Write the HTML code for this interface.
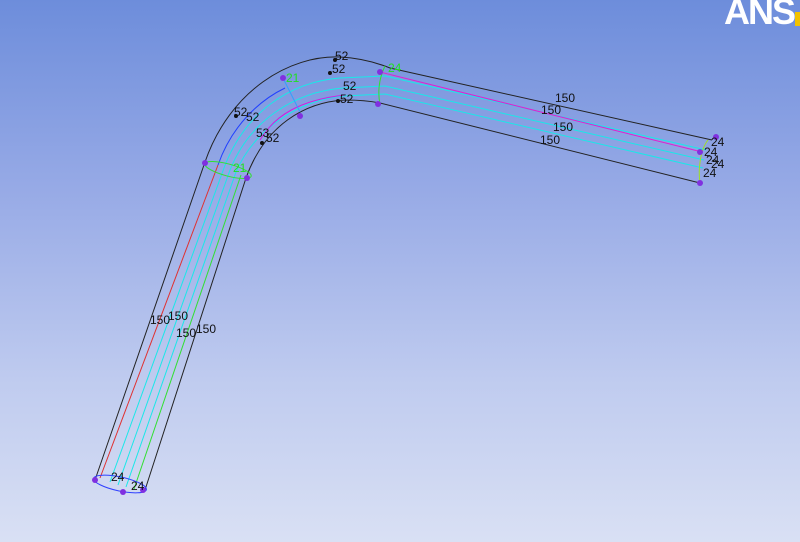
<!DOCTYPE html>
<html><head><style>
html,body{margin:0;padding:0;width:800px;height:542px;overflow:hidden}
body{background:linear-gradient(#6d8ddb 0%,#97aae6 35%,#bfcbef 70%,#d9e0f4 100%);font-family:"Liberation Sans",sans-serif}
svg{position:absolute;left:0;top:0}
text{font-family:"Liberation Sans",sans-serif;font-size:12px;fill:#111}
</style></head><body>
<svg width="800" height="542" viewBox="0 0 800 542">
<text x="724" y="24" style="font-size:36px;font-weight:bold;fill:#fff;letter-spacing:-2px">ANS</text>
<rect x="795" y="12" width="5" height="14" fill="#f2c200"/>
<g fill="none" stroke-width="1">
<path d="M95,480 L205,162 C230,90 290,55 340,57 C360,58 375,62 390,68 L712,140" stroke="#222"/>
<path d="M145,490 L246,178 C265,125 305,102 345,100 C360,100 370,101 380,103 L700,183" stroke="#222"/>
<path d="M100,478 L218,165" stroke="#e03030"/>
<path d="M110,482 L224,168 C245,112 290,82 340,78 L385,76 L706,150" stroke="#19e8e8"/>
<path d="M118,485 L230,170 C250,120 295,92 343,88 L385,86 L704,160" stroke="#19e8e8"/>
<path d="M126,487 L236,172 C255,128 300,100 344,96 L385,94 L703,168" stroke="#19e8e8"/>
<path d="M134,489 L241,175" stroke="#30e030"/>
<path d="M218,165 C232,125 260,100 285,88" stroke="#2040ff"/>
<path d="M380,72 L702,152" stroke="#e020d0"/>
<path d="M260,140 C275,115 300,100 345,95" stroke="#d020e0"/>
<path d="M385,66 C378,80 378,95 380,104" stroke="#30e030"/>
<path d="M283,78 L300,112" stroke="#30a0ff"/>
<path d="M708,140 C700,150 698,170 700,183" stroke="#a0e020"/>
<ellipse cx="120" cy="484" rx="27" ry="7" stroke="#3040ff" transform="rotate(12 120 484)"/>
<ellipse cx="228" cy="170" rx="24" ry="6" stroke="#30e030" transform="rotate(15 228 170)"/>
</g>
<g fill="#8030e0">
<circle cx="95" cy="480" r="3"/><circle cx="123" cy="492" r="3"/><circle cx="143" cy="490" r="3"/>
<circle cx="205" cy="163" r="3"/><circle cx="247" cy="178" r="3"/><circle cx="283" cy="78" r="3"/>
<circle cx="300" cy="116" r="3"/><circle cx="380" cy="72" r="3"/><circle cx="378" cy="104" r="3"/>
<circle cx="700" cy="152" r="3"/><circle cx="700" cy="183" r="3"/><circle cx="716" cy="137" r="3"/>
</g>
<g fill="#111"><circle cx="335" cy="60" r="2"/><circle cx="330" cy="73" r="2"/><circle cx="236" cy="116" r="2"/><circle cx="338" cy="101" r="2"/><circle cx="262" cy="143" r="2"/></g>
<text x="335" y="60">52</text><text x="332" y="73">52</text><text x="343" y="90">52</text><text x="340" y="103">52</text>
<text x="234" y="116">52</text><text x="246" y="121">52</text><text x="256" y="137">53</text><text x="266" y="142">52</text>
<text x="555" y="102">150</text><text x="541" y="114">150</text><text x="553" y="131">150</text><text x="540" y="144">150</text>
<text x="150" y="324">150</text><text x="168" y="320">150</text><text x="176" y="337">150</text><text x="196" y="333">150</text>
<text x="111" y="481">24</text><text x="131" y="490">24</text>
<text x="711" y="146">24</text><text x="704" y="156">24</text><text x="706" y="164">24</text><text x="711" y="168">24</text><text x="703" y="177">24</text>
<g style="fill:#20e020"><text x="388" y="72" style="fill:#20e020">24</text><text x="286" y="82" style="fill:#20e020">21</text><text x="233" y="172" style="fill:#20e020">21</text></g>
</svg>
</body></html>
